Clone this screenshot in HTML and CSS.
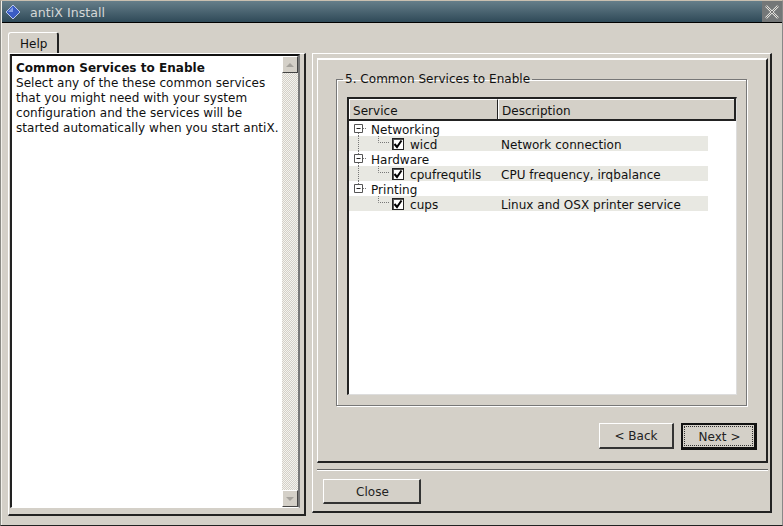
FILE: index.html
```html
<!DOCTYPE html>
<html lang="en">
<head>
<meta charset="utf-8">
<title>antiX Install</title>
<link rel="stylesheet" href="styles.css">
</head>
<body>
<div class="window">
  <header class="titlebar">
    <svg class="app-icon" width="16" height="16" viewBox="0 0 16 16"><path d="M8 1 15 8 8 15 1 8Z" fill="#3a5cc4" stroke="#b9c6ea" stroke-width="1"/><path d="M8 3 8 8 3 8Z" fill="#86a0e8"/></svg>
    <span class="title">antiX Install</span>
    <span class="close-x"><svg width="20" height="21" viewBox="0 0 20 21"><path d="M4 5 16 17M16 5 4 17" stroke="#e8e8e4" stroke-width="2.4" fill="none"/><path d="M4 5 16 17M16 5 4 17" stroke="#444" stroke-width=".7" fill="none"/></svg></span>
  </header>
  <div class="content">
    <section class="left">
      <div class="tab">Help</div>
      <div class="help-frame">
        <div class="help-box">
          <div class="help-text"><b>Common Services to Enable</b><br>Select any of the these common services that you might need with your system configuration and the services will be started automatically when you start antiX.</div>
          <div class="scrollbar">
            <span class="sb-btn"><i class="arrow-up"></i></span>
            <span class="sb-btn"><i class="arrow-down"></i></span>
          </div>
        </div>
      </div>
    </section>
    <section class="right">
      <div class="page">
        <fieldset class="group">
          <legend>5. Common Services to Enable</legend>
          <div class="tree">
            <div class="thead">
              <div class="th th-service">Service</div>
              <div class="th th-desc">Description</div>
            </div>
            <div class="rows">
              <div class="row group-row">
                <svg class="gutter" width="22" height="15" viewBox="0 0 22 15"><path d="M4.5 12v3M9 7.5h4" stroke="#777" stroke-dasharray="1 1" fill="none"/><path d="M.5 3.5h8v8h-8Z" fill="#fff" stroke="#555"/><path d="M2.5 7.5h4" stroke="#222"/></svg>
                <span class="name">Networking</span>
              </div>
              <div class="row child-row">
                <svg class="gutter-child" width="38" height="15" viewBox="0 0 38 15"><path d="M4.5 0v15M24.5 0v6.5h11" stroke="#777" stroke-dasharray="1 1" fill="none"/></svg>
                <span class="check"><svg width="10" height="10" viewBox="0 0 10 10"><path d="M1.5 5 4 8 8.5 1.5" stroke="#000" stroke-width="2" fill="none"/></svg></span>
                <span class="child-name">wicd</span>
                <span class="desc">Network connection</span>
              </div>
              <div class="row group-row">
                <svg class="gutter" width="22" height="15" viewBox="0 0 22 15"><path d="M4.5 0v3M4.5 12v3M9 7.5h4" stroke="#777" stroke-dasharray="1 1" fill="none"/><path d="M.5 3.5h8v8h-8Z" fill="#fff" stroke="#555"/><path d="M2.5 7.5h4" stroke="#222"/></svg>
                <span class="name">Hardware</span>
              </div>
              <div class="row child-row">
                <svg class="gutter-child" width="38" height="15" viewBox="0 0 38 15"><path d="M4.5 0v15M24.5 0v6.5h11" stroke="#777" stroke-dasharray="1 1" fill="none"/></svg>
                <span class="check"><svg width="10" height="10" viewBox="0 0 10 10"><path d="M1.5 5 4 8 8.5 1.5" stroke="#000" stroke-width="2" fill="none"/></svg></span>
                <span class="child-name">cpufrequtils</span>
                <span class="desc">CPU frequency, irqbalance</span>
              </div>
              <div class="row group-row">
                <svg class="gutter" width="22" height="15" viewBox="0 0 22 15"><path d="M4.5 0v3M9 7.5h4" stroke="#777" stroke-dasharray="1 1" fill="none"/><path d="M.5 3.5h8v8h-8Z" fill="#fff" stroke="#555"/><path d="M2.5 7.5h4" stroke="#222"/></svg>
                <span class="name">Printing</span>
              </div>
              <div class="row child-row">
                <svg class="gutter-child" width="38" height="15" viewBox="0 0 38 15"><path d="M24.5 0v6.5h11" stroke="#777" stroke-dasharray="1 1" fill="none"/></svg>
                <span class="check"><svg width="10" height="10" viewBox="0 0 10 10"><path d="M1.5 5 4 8 8.5 1.5" stroke="#000" stroke-width="2" fill="none"/></svg></span>
                <span class="child-name">cups</span>
                <span class="desc">Linux and OSX printer service</span>
              </div>
            </div>
          </div>
        </fieldset>
        <div class="nav-buttons">
          <button class="btn btn-back" type="button">&lt; Back</button>
          <button class="btn btn-next" type="button"><span class="focus">Next &gt;</span></button>
        </div>
      </div>
      <div class="separator"></div>
      <div class="footer">
        <button class="btn btn-close" type="button">Close</button>
      </div>
    </section>
  </div>
</div>
</body>
</html>
```
FILE: styles.css
```css
* { box-sizing: border-box; }
html, body { margin: 0; padding: 0; }
body {
  width: 783px;
  height: 526px;
  overflow: hidden;
  background: #d4d0c8;
  font-family: "DejaVu Sans", sans-serif;
  font-size: 12px;
  line-height: 15px;
  letter-spacing: .03px;
  color: #111;
}
.window {
  width: 783px;
  height: 526px;
  display: flex;
  flex-direction: column;
  border-top: 1px solid #c9bfb0;
  border-bottom: 1px solid #222;
  border-left: 1px solid #8a8a84;
  border-right: 1px solid #888;
  box-shadow: inset 1px 0 0 #f2f0ea;
}
.titlebar {
  height: 22px;
  flex: none;
  margin-left: 1px;
  display: flex;
  align-items: center;
  padding-left: 3px;
  background: linear-gradient(#667e8a, #2f4a58);
  border-bottom: 1px solid #000;
}
.app-icon { flex: none; }
.title {
  margin-left: 9px;
  padding-top: 2px;
  font-size: 12.6px;
  color: #d5d7d6;
  flex: 1;
}
.close-x {
  width: 20px;
  height: 21px;
  flex: none;
  background: #747778;
  display: flex;
}
.content {
  flex: 1;
  display: flex;
  align-items: flex-start;
  gap: 6px;
  padding: 9px 0 0 7px;
}
.left { width: 298px; flex: none; }
.tab {
  width: 51px;
  height: 21px;
  padding: 4px 0 0 11px;
  border-top: 1px solid #fff;
  border-left: 1px solid #fff;
  border-right: 2px solid #222;
  border-radius: 3px 3px 0 0;
  background: #d4d0c8;
}
.help-frame {
  height: 463px;
  padding: 0 4px 6px 1px;
  border-top: 1px solid #fff;
  border-left: 1px solid #fff;
  border-right: 2px solid #222;
  border-bottom: 2px solid #222;
}
.help-box {
  height: 100%;
  width: 290px;
  display: flex;
  border-top: 2px solid #111;
  border-left: 2px solid #222;
  border-right: 2px solid #777;
  border-bottom: 1px solid #fff;
  background: #fff;
}
.help-text {
  width: 270px;
  flex: none;
  padding: 5px 2px 0 4px;
}
.scrollbar {
  width: 16px;
  flex: none;
  display: flex;
  flex-direction: column;
  justify-content: space-between;
  background: repeating-conic-gradient(#d4d0c8 0 25%, #f4f3ef 0 50%) 0 0 / 2px 2px;
}
.sb-btn {
  height: 17px;
  display: flex;
  align-items: center;
  justify-content: center;
  background: #d4d0c8;
  border-top: 1px solid #fff;
  border-left: 1px solid #fff;
  border-right: 1px solid #444;
  border-bottom: 1px solid #444;
}
.arrow-up, .arrow-down {
  width: 0;
  height: 0;
  border-left: 4px solid transparent;
  border-right: 4px solid transparent;
}
.arrow-up { border-bottom: 4px solid #a5a29c; }
.arrow-down { border-top: 4px solid #a5a29c; }
.right {
  width: 460px;
  flex: none;
  height: 460px;
  margin-top: 21px;
  padding: 4px 4px 0;
  border-top: 1px solid #fff;
  border-left: 1px solid #fff;
  border-right: 2px solid #222;
  border-bottom: 2px solid #222;
}
.page {
  height: 405px;
  width: 451px;
  padding: 0 9px 0 18px;
  display: flex;
  flex-direction: column;
  border-top: 2px solid #fff;
  border-left: 1px solid #fff;
  border-right: 2px solid #222;
  border-bottom: 2px solid #222;
}
.group {
  margin: 12px 10px 0 0;
  padding: 0 9px 9px 10px;
  width: 411px;
  height: 334px;
  border: 1px solid #777;
  box-shadow: 1px 1px 0 #fff, inset 1px 1px 0 #fff;
}
.group legend {
  padding: 0 2px;
  margin-left: -4px;
  line-height: 15px;
}
.tree {
  width: 390px;
  height: 298px;
  margin-top: 10px;
  background: #fff;
  border-top: 2px solid #222;
  border-left: 2px solid #222;
  border-right: 1px solid #ddd;
  border-bottom: 1px solid #ddd;
}
.thead {
  display: flex;
  height: 22px;
  border-right: 2px solid #222;
  border-bottom: 2px solid #222;
  background: #d4d0c8;
}
.th {
  padding: 4px 0 0 3px;
  border-top: 1px solid #fff;
  border-left: 1px solid #fff;
}
.th-service { width: 149px; border-right: 1px solid #222; }
.th-desc { flex: 1; padding-left: 3px; }
.rows { width: 359px; }
.row {
  height: 15px;
  display: flex;
  align-items: flex-start;
  white-space: nowrap;
}
.group-row { padding-left: 5px; }
.gutter { flex: none; }
.gutter-child { flex: none; margin-left: 5px; }
.name { margin-left: -5px; padding-top: 2px; }
.child-name, .desc { padding-top: 2px; }
.child-row { background: #e8e8e2; }
.check {
  width: 12px;
  height: 12px;
  flex: none;
  margin-top: 2px;
  background: #fff;
  border: 1px solid #222;
  box-shadow: inset 1px 1px 0 #555;
  display: flex;
}
.child-name { width: 91px; margin-left: 6px; }
.desc { flex: 1; }
.nav-buttons {
  display: flex;
  justify-content: flex-end;
  gap: 7px;
  margin-top: 17px;
}
.btn {
  font: inherit;
  letter-spacing: inherit;
  color: #222;
  background: #d4d0c8;
  border-top: 1px solid #fff;
  border-left: 1px solid #fff;
  border-right: 2px solid #333;
  border-bottom: 2px solid #333;
  padding: 2px 0 0;
}
.btn-back { width: 75px; height: 26px; }
.btn-next {
  width: 76px;
  height: 27px;
  border: 2px solid #111;
  border-right-width: 3px;
  border-bottom-width: 3px;
  padding: 1px;
}
.focus {
  display: block;
  height: 100%;
  line-height: 20px;
  padding-left: 2px;
  border: 1px dotted #333;
}
.separator {
  height: 2px;
  width: 451px;
  margin-top: 6px;
  border-top: 1px solid #666;
  border-bottom: 1px solid #fff;
}
.footer { padding: 8px 0 0 6px; }
.btn-close { width: 98px; height: 25px; padding-left: 2px; }
```
